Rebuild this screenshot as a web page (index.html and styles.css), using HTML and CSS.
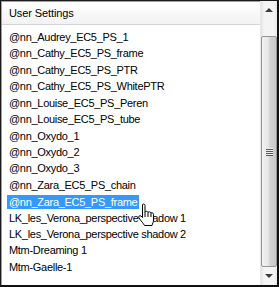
FILE: index.html
```html
<!DOCTYPE html>
<html lang="en">
<head>
    <meta charset="UTF-8">
    <title>User Settings</title>
    <link rel="stylesheet" href="styles.css">
</head>
<body>
    <div class="listbox">
        <div class="list">
            <div class="header">User Settings</div>
            <ul class="items">
                <li>@nn_Audrey_EC5_PS_1</li>
                <li>@nn_Cathy_EC5_PS_frame</li>
                <li>@nn_Cathy_EC5_PS_PTR</li>
                <li>@nn_Cathy_EC5_PS_WhitePTR</li>
                <li>@nn_Louise_EC5_PS_Peren</li>
                <li>@nn_Louise_EC5_PS_tube</li>
                <li>@nn_Oxydo_1</li>
                <li>@nn_Oxydo_2</li>
                <li>@nn_Oxydo_3</li>
                <li>@nn_Zara_EC5_PS_chain</li>
                <li><span class="selected">@nn_Zara_EC5_PS_frame</span></li>
                <li>LK_les_Verona_perspective shadow 1</li>
                <li>LK_les_Verona_perspective shadow 2</li>
                <li>Mtm-Dreaming 1</li>
                <li>Mtm-Gaelle-1</li>
            </ul>
        </div>
        <div class="scrollbar">
            <div class="arrow up"></div>
            <div class="thumb"><div class="grip"></div></div>
            <div class="arrow down"></div>
        </div>

        <!-- pointer over the selected row -->
        <svg class="cursor" width="18" height="24" viewBox="0 0 18 24">
            <path d="M5.5 1.5 C6.5 0.5 8 1 8 2.5 V9 C8.5 8 10.5 8 11 9.5 C11.5 8.5 13.5 8.5 14 10 C14.5 9.5 16.5 9.5 16.5 11.5 V17 C16.5 19 15.5 20.5 15 22.5 H7.5 C6.5 20.5 4 18 2 15 C1 13.5 2.5 12 4 13 L5.5 14.5 Z" fill="#fff" stroke="#000" stroke-width="1"/>
            <path d="M8 9 V14 M11 9.5 V14 M14 10 V14" stroke="#000" stroke-width="1" fill="none"/>
        </svg>
    </div>
</body>
</html>
```

FILE: styles.css
```css
* {
    box-sizing: border-box;
}

body {
    margin: 0;
    background: #fff;
    font-family: "Liberation Sans", Arial, sans-serif;
    font-size: 11px;
    color: #000;
}

.listbox {
    position: relative;
    width: 279px;
    height: 287px;
    display: flex;
    border-top: 1px solid #1a1a1a;
    border-left: 1px solid #1a1a1a;
    border-right: 2px solid #111;
    border-bottom: 2px solid #111;
    background: #fff;
    overflow: hidden;
}

.list {
    flex: 1;
    display: flex;
    flex-direction: column;
    border-left: 1px solid #a0a0a0;
    border-top: 1px solid #a0a0a0;
}

.header {
    height: 23px;
    padding: 5px 0 0 7px;
    background: linear-gradient(#ffffff, #f2f2f4);
    border-bottom: 1px solid #d5d5d5;
    letter-spacing: -0.1px;
}

.items {
    list-style: none;
    margin: 0;
    padding: 4px 0 0 0;
}

.items li {
    height: 16.43px;
    line-height: 16px;
    padding-left: 7px;
    white-space: nowrap;
    letter-spacing: -0.3px;
}

.selected {
    display: inline-block;
    padding: 0 2px;
    margin-left: -2px;
    line-height: 14px;
    margin-top: 2px;
    background: #3399ff;
    color: #fff;
}

.scrollbar {
    width: 17px;
    display: flex;
    flex-direction: column;
    background: linear-gradient(90deg, #e3e3e3, #f4f4f4 20%, #f4f4f4 80%, #e8e8e8);
    border-left: 1px solid #e8e8e8;
}

.arrow {
    height: 17px;
    position: relative;
}

.arrow::after {
    content: "";
    position: absolute;
    left: 4px;
    border-left: 4px solid transparent;
    border-right: 4px solid transparent;
}

.arrow.up::after {
    top: 7px;
    border-bottom: 4px solid #3c3c3c;
}

.arrow.down::after {
    top: 6px;
    border-top: 4px solid #3c3c3c;
}

.thumb {
    flex: 1;
    margin: 18px 0 1px 0;
    border: 1px solid #969696;
    border-radius: 2px;
    background: linear-gradient(90deg, #f2f2f2, #e6e6e6 45%, #d4d4d4 55%, #c8c8c8);
    display: flex;
    align-items: center;
    justify-content: center;
}

.grip {
    width: 7px;
    height: 8px;
    background: repeating-linear-gradient(#ececec 0 1px, #5a5a5a 1px 2px);
}

.cursor {
    position: absolute;
    left: 136px;
    top: 202px;
}
```
